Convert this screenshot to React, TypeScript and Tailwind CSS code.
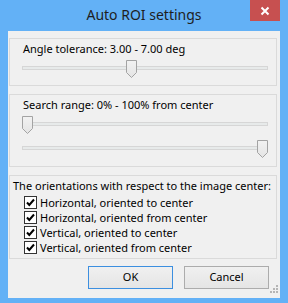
import React from "react";

const font = { fontFamily: '"Noto Sans", "Open Sans", Arial, sans-serif' };

function Thumb() {
  return (
    <svg width="11" height="18" viewBox="0 0 11 18" className="block">
      <defs>
        <linearGradient id="tg" x1="0" y1="0" x2="0" y2="1">
          <stop offset="0" stopColor="#f2f2f2" />
          <stop offset="1" stopColor="#e4e4e4" />
        </linearGradient>
      </defs>
      <path d="M0.5 0.5 H10.5 V12.5 L5.5 17.5 L0.5 12.5 Z" fill="url(#tg)" stroke="#a3a3a3" strokeWidth="1" />
    </svg>
  );
}

function Slider({ left }: { left: number }) {
  return (
    <div className="relative h-[18px] ml-[12px] w-[246px]">
      <div className="absolute left-0 right-0 top-[6px] h-[4px] border border-[#d6d6d6] bg-[#e7eaea]" />
      <div className="absolute top-0" style={{ left }}>
        <Thumb />
      </div>
    </div>
  );
}

function Check({ label }: { label: string }) {
  return (
    <div className="flex items-center h-[15px] pl-[14px] gap-[3px]">
      <div className="w-[13px] h-[13px] shrink-0 border border-[#333333] bg-white flex items-center justify-center">
        <svg width="11" height="11" viewBox="0 0 11 11">
          <path d="M2 5.5 L4.3 8 L9 2.5" fill="none" stroke="#000" strokeWidth="2" />
        </svg>
      </div>
      <span className="text-[11px] leading-[15px] text-black whitespace-nowrap">{label}</span>
    </div>
  );
}

export default function App() {
  return (
    <div className="w-[288px] h-[303px] bg-[#63b1f6] flex flex-col overflow-hidden" style={font}>
      <div className="h-[31px] grid grid-cols-[1fr_auto_1fr]">
        <div />
        <div className="text-[14px] leading-[30px] text-[#1e1e1e] whitespace-nowrap">Auto ROI settings</div>
        <div className="flex justify-end items-start pr-[8px]">
          <div className="w-[30px] h-[21px] bg-[#c75050] flex items-center justify-center">
            <svg width="10" height="10" viewBox="0 0 10 10">
              <path d="M1.5 1.5 L8.5 8.5 M8.5 1.5 L1.5 8.5" stroke="#fff" strokeWidth="2" />
            </svg>
          </div>
        </div>
      </div>
      <div className="relative mx-[8px] h-[267px] bg-[#f0f0f0] flex flex-col pt-[7px]">
        <div className="ml-[1px] mr-[3px] h-[48px] border border-[#dadada] pt-[2px]">
          <div className="pl-[13px] text-[11px] leading-[16px] text-black whitespace-nowrap">Angle tolerance: 3.00 - 7.00 deg</div>
          <div className="mt-[3px]">
            <Slider left={104} />
          </div>
        </div>
        <div className="ml-[1px] mr-[3px] mt-[8px] h-[73px] border border-[#dadada] pt-[2px]">
          <div className="pl-[13px] text-[11px] leading-[16px] text-black whitespace-nowrap">Search range: 0% - 100% from center</div>
          <div className="mt-[3px]">
            <Slider left={0} />
          </div>
          <div className="mt-[6px]">
            <Slider left={235} />
          </div>
        </div>
        <div className="ml-[1px] mr-[3px] mt-[8px] h-[84px] border border-[#dadada] pt-[2px]">
          <div className="pl-[3px] text-[11px] leading-[16px] text-black whitespace-nowrap">The orientations with respect to the image center:</div>
          <div className="mt-[1px] flex flex-col">
            <Check label="Horizontal, oriented to center" />
            <Check label="Horizontal, oriented from center" />
            <Check label="Vertical, oriented to center" />
            <Check label="Vertical, oriented from center" />
          </div>
        </div>
        <div className="mt-[7px] flex justify-end gap-[11px] pr-[11px]">
          <button className="w-[85px] h-[23px] border border-[#3c8fe0] bg-linear-to-b from-[#f0f0f0] to-[#e5e5e5] text-[11px] text-black">OK</button>
          <button className="w-[85px] h-[23px] border border-[#acacac] bg-linear-to-b from-[#f0f0f0] to-[#e5e5e5] text-[11px] text-black">Cancel</button>
        </div>
        <svg width="10" height="10" viewBox="0 0 10 10" className="absolute right-[1px] bottom-[4px]">
          <g fill="#b5b5b5">
            <rect x="7" y="1" width="2" height="2" />
            <rect x="4" y="4" width="2" height="2" />
            <rect x="7" y="4" width="2" height="2" />
            <rect x="1" y="7" width="2" height="2" />
            <rect x="4" y="7" width="2" height="2" />
            <rect x="7" y="7" width="2" height="2" />
          </g>
        </svg>
      </div>
    </div>
  );
}
